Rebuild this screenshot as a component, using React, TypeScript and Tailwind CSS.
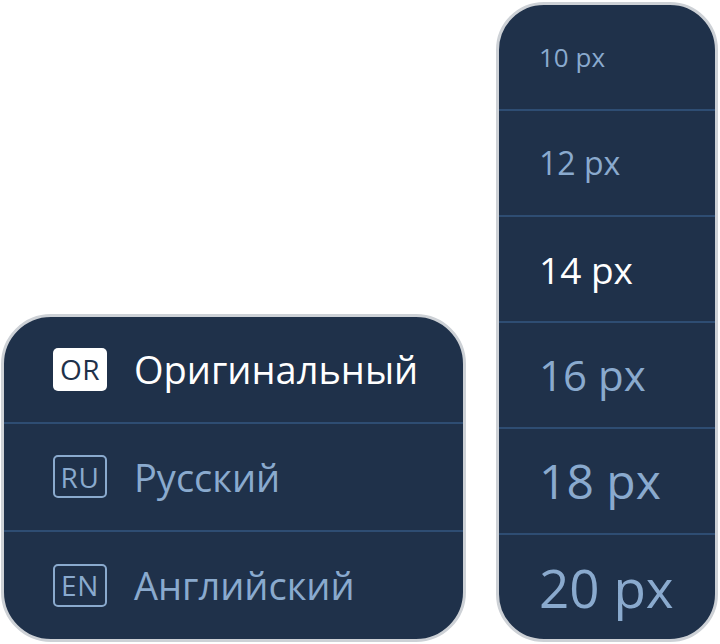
import React from 'react'

const languages = [
  { code: 'OR', label: 'Оригинальный', active: true },
  { code: 'RU', label: 'Русский', active: false },
  { code: 'EN', label: 'Английский', active: false },
]

const sizes = [
  { label: '10 px', cls: 'text-[26px]', active: false },
  { label: '12 px', cls: 'text-[32px]', active: false },
  { label: '14 px', cls: 'text-[37px]', active: true },
  { label: '16 px', cls: 'text-[42px]', active: false },
  { label: '18 px', cls: 'text-[48px]', active: false },
  { label: '20 px', cls: 'text-[53px]', active: false },
]

export default function App() {
  return (
    <div
      className="w-[720px] h-[644px] bg-white flex items-end gap-[30px] pl-[1px] pb-[2px] pt-[2px]"
      style={{ fontFamily: '"Open Sans", "Noto Sans", sans-serif' }}
    >
      <div className="w-[465px] rounded-[50px] border-[3px] border-[#cdd1d6] bg-[#1f314a] overflow-hidden flex flex-col">
        {languages.map((lang, i) => (
          <div
            key={lang.code}
            className={`h-[107.5px] flex items-center pl-[49px] gap-[27px] ${i < languages.length - 1 ? 'border-b-2 border-[#2e4d73]' : ''}`}
          >
            {lang.active ? (
              <span className="w-[54px] h-[43px] rounded-[5px] bg-white text-[#1f314a] flex items-center justify-center text-[28px] tracking-[0.02em] leading-none">
                {lang.code}
              </span>
            ) : (
              <span className="w-[54px] h-[43px] rounded-[5px] border-2 border-[#8aaace] text-[#8aaace] flex items-center justify-center text-[28px] tracking-[0.02em] leading-none">
                {lang.code}
              </span>
            )}
            <span className={`text-[38px] leading-none ${lang.active ? 'text-white' : 'text-[#8aaace]'}`}>
              {lang.label}
            </span>
          </div>
        ))}
      </div>

      <div className="w-[222px] h-[640px] rounded-[48px] border-[3px] border-[#cdd1d6] bg-[#1f314a] overflow-hidden flex flex-col">
        {sizes.map((s, i) => (
          <div
            key={s.label}
            className={`flex-1 flex items-center pl-[40px] ${i < sizes.length - 1 ? 'border-b-2 border-[#2e4d73]' : ''}`}
          >
            <span className={`${s.cls} leading-none ${s.active ? 'text-white' : 'text-[#8aaace]'}`}>{s.label}</span>
          </div>
        ))}
      </div>
    </div>
  )
}
